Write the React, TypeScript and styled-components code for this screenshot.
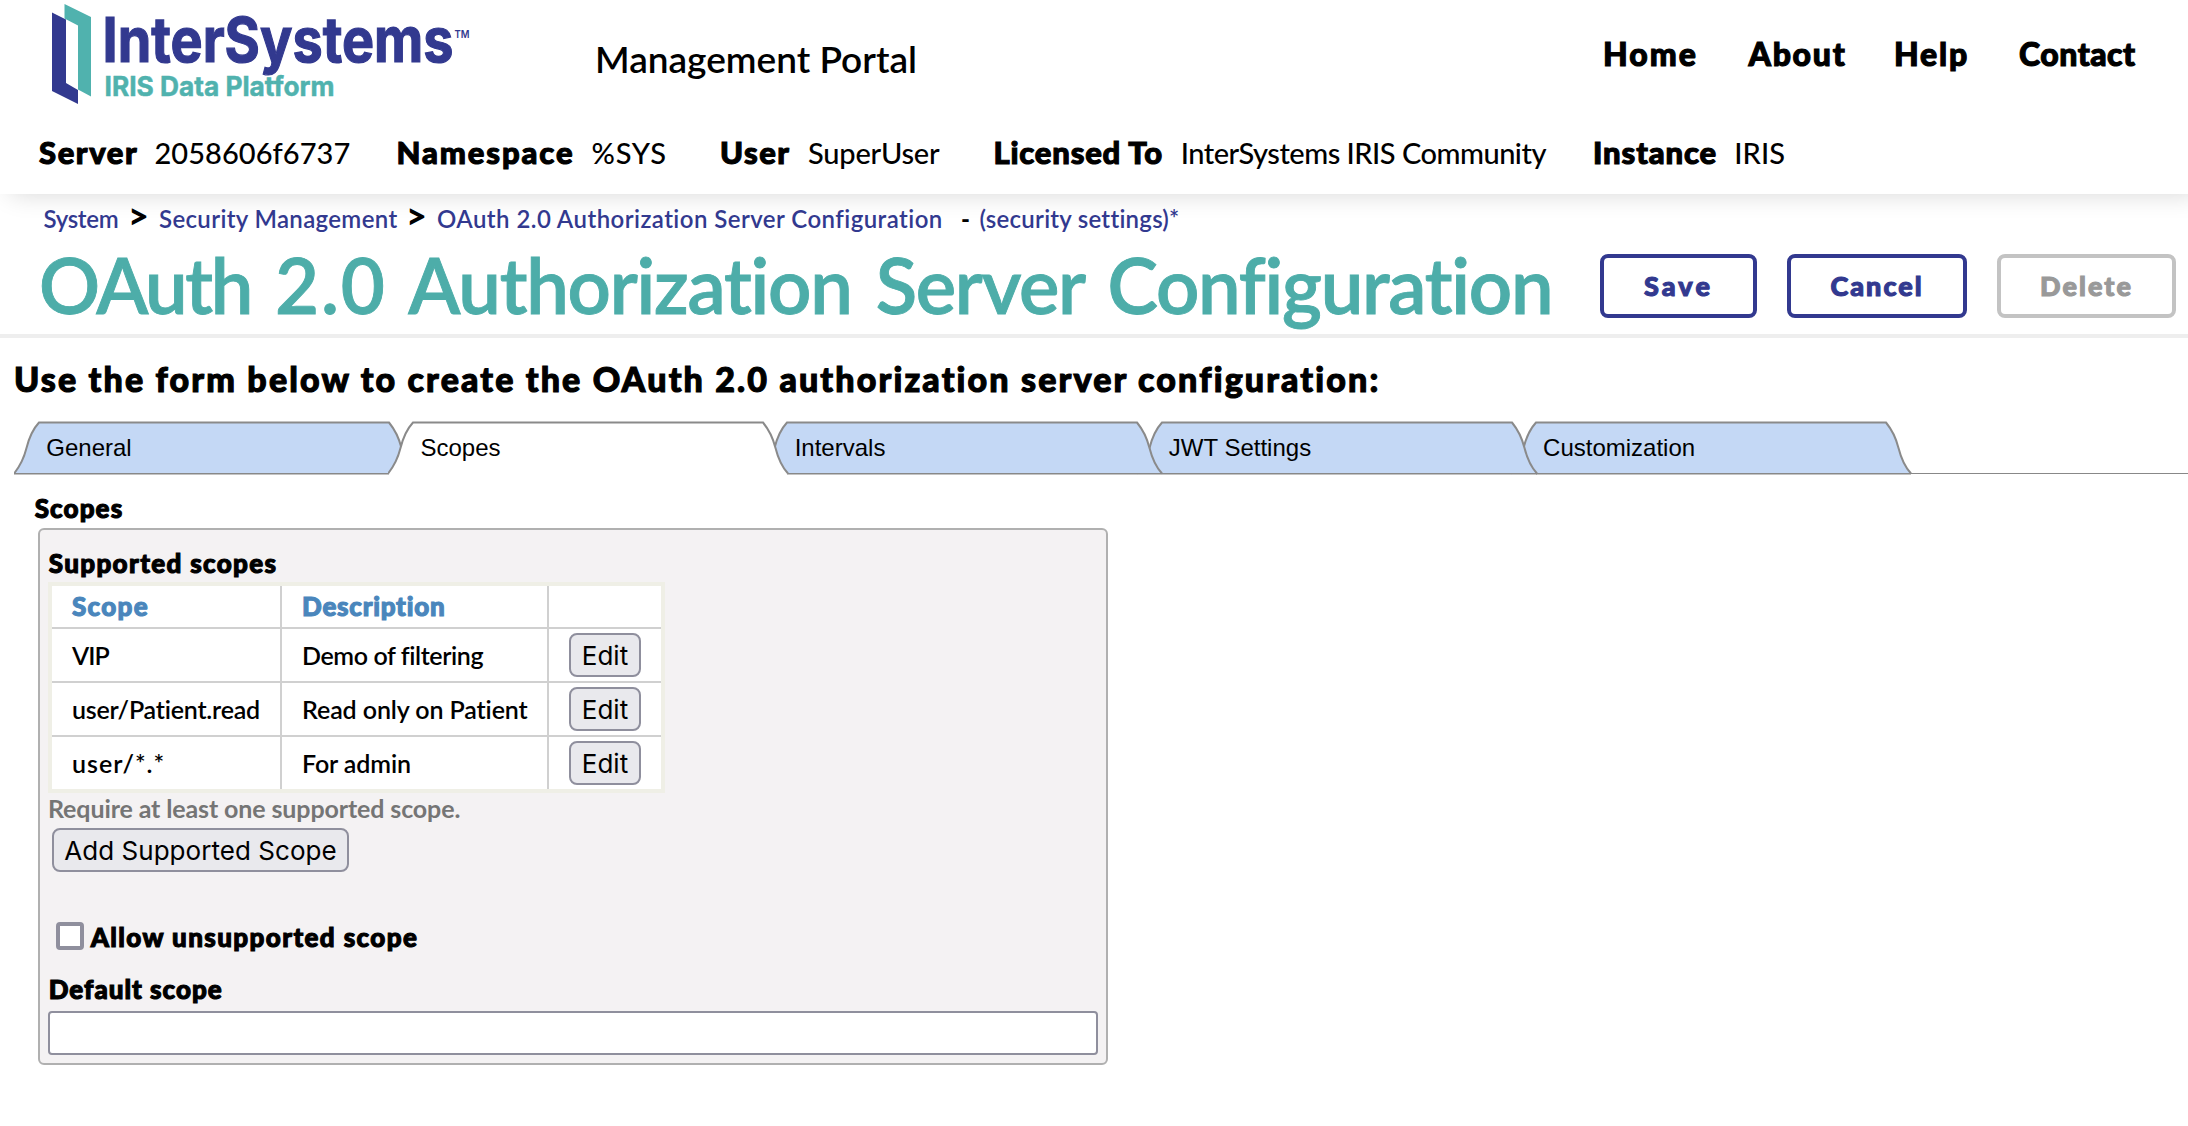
import React from "react";
import styled, { createGlobalStyle, css } from "styled-components";

const GlobalStyle = createGlobalStyle`
  * { box-sizing: border-box; }
  body {
    margin: 0;
    background: #fff;
    color: #000;
    font-family: Lato, "Open Sans", sans-serif;
    font-weight: 600;
    overflow-x: hidden;
  }
`;

const NAVY = "#32398f";
const TEAL = "#4dada9";

const tracked = css<{ $track?: number }>`
  letter-spacing: ${(p) => p.$track ?? 0}px;
  white-space: nowrap;
`;

const heavy = css`
  font-weight: 900;
  -webkit-text-stroke: 1.1px currentColor;
`;

/* ---------- header ---------- */

const Page = styled.div`
  width: 2188px;
  height: 1126px;
  overflow: hidden;
`;

const Header = styled.header`
  height: 194px;
  background: #fff;
  box-shadow: 10px 0 24px rgba(0, 0, 0, 0.16);
`;

const HeaderTop = styled.div`
  display: flex;
  align-items: flex-start;
  height: 132px;
  padding-left: 48px;
`;

const LogoSvg = styled.svg`
  display: block;
  width: 432px;
  height: 110px;
`;

const PortalName = styled.div`
  ${tracked}
  margin: 37px 0 0 115px;
  width: 1008px;
  font-size: 37px;
  font-weight: 600;
  line-height: 44px;
`;

const Nav = styled.nav`
  display: grid;
  grid-template-columns: 145.5px 145.5px 125px auto;
  margin-top: 34px;
`;

const NavLink = styled.a`
  ${tracked}
  ${heavy}
  font-size: 32px;
  line-height: 40px;
`;

const InfoBar = styled.div`
  display: grid;
  grid-template-columns: 115.5px 242px 195px 128.5px 88px 185.5px 187.2px 412.3px 141.3px auto;
  align-items: baseline;
  padding-left: 39px;
  line-height: 40px;
`;

const InfoLabel = styled.span`
  ${tracked}
  ${heavy}
  font-size: 31px;
`;

const InfoValue = styled.span`
  ${tracked}
  font-size: 29px;
  font-weight: 500;
`;

/* ---------- title area ---------- */

const TitleArea = styled.section`
  height: 144px;
  padding-top: 9px;
  border-bottom: 4px solid #eee;
`;

const Crumbs = styled.div`
  display: grid;
  grid-template-columns: 84.5px 31px 247px 31px 524px 18.5px auto;
  height: 32px;
  padding-left: 43.5px;
  font-size: 24px;
  line-height: 32px;
`;

const Crumb = styled.a`
  ${tracked}
  color: ${NAVY};
`;

const Arrow = styled.span`
  font-size: 36px;
  font-weight: 900;
  line-height: 24px;
`;

const Dash = styled.span`
  font-weight: 900;
`;

const TitleRow = styled.div`
  display: flex;
  align-items: center;
  height: 99px;
  padding-left: 38px;
`;

const Title = styled.h1`
  ${tracked}
  width: 1562px;
  margin: 0;
  padding-left: 1px;
  color: ${TEAL};
  font-size: 76px;
  font-weight: 600;
  line-height: 92px;
  word-spacing: 6.5px;
  -webkit-text-stroke: 0.9px currentColor;
`;

const Word = styled.span`
  ${tracked}
`;

const Actions = styled.div`
  display: flex;
  gap: 30px;
  padding-top: 2px;
`;

const ActionButton = styled.button<{ $width: number; $track: number }>`
  ${tracked}
  width: ${(p) => p.$width}px;
  height: 64px;
  padding: 0 0 1px;
  border: 4px solid ${NAVY};
  border-radius: 8px;
  background: #fff;
  color: ${NAVY};
  font: 900 27px Lato, sans-serif;
  -webkit-text-stroke: 1.1px currentColor;

  &:disabled {
    border-color: #c3c3c3;
    color: #999;
  }
`;

/* ---------- tabs ---------- */

const FormHeading = styled.h2`
  ${tracked}
  ${heavy}
  height: 40px;
  margin: 21px 0 22px 14px;
  font-size: 34px;
  line-height: 40px;
`;

const TabStrip = styled.div`
  display: flex;
  height: 54px;
  padding-left: 14px;
`;

const Tab = styled.div<{ $z: number }>`
  position: relative;
  z-index: ${(p) => p.$z};
  flex: none;
  width: 374.2px;
  height: 54px;
  padding: 9.5px 0 0 32.3px;
  font: 24px/34px "Liberation Sans", Arial, sans-serif;
`;

const TabShape = styled.svg`
  position: absolute;
  left: 0;
  top: 0;
  width: 402px;
  height: 54px;
`;

const TabLabel = styled.span`
  position: relative;
`;

const TabRule = styled.div`
  flex: 1;
  height: 1.4px;
  margin: 52px 0 0 25px;
  background: #888;
`;

/* ---------- form ---------- */

const Form = styled.main`
  padding: 17px 0 0 34px;
`;

const Label = styled.div`
  ${tracked}
  ${heavy}
  padding-left: 0.7px;
  font-size: 26px;
  line-height: 32px;
`;

const Panel = styled.div`
  width: 1070px;
  height: 537px;
  margin: 4px 0 0 4px;
  padding: 17px 9px 0 8px;
  border: 2px solid #b0b0b0;
  border-radius: 6px;
  background: #f4f2f3;
`;

const ScopeTable = styled.div`
  display: grid;
  grid-template-columns: 230px 267px 112px;
  grid-template-rows: 43px 54px 54px 52px;
  width: 617px;
  margin-top: 3px;
  border: 4px solid #efefe6;
  background: #fff;
`;

const Cell = styled.div<{ $last?: boolean; $track?: number; $mid?: boolean }>`
  ${tracked}
  display: flex;
  align-items: center;
  justify-content: ${(p) => (p.$mid ? "center" : "flex-start")};
  padding-left: ${(p) => (p.$mid ? 0 : 20)}px;
  border-right: ${(p) => (p.$mid ? "0" : "2px solid #d0d0d0")};
  border-bottom: ${(p) => (p.$last ? "0" : "2px solid #d0d0d0")};
  font-size: 25px;
`;

const HeadCell = styled(Cell)`
  ${heavy}
  padding-bottom: 1px;
  color: #4a86bc;
  font-size: 26px;
`;

const SystemButton = styled.button<{ $width: number; $track: number }>`
  ${tracked}
  display: block;
  width: ${(p) => p.$width}px;
  height: 44px;
  padding: 0;
  border: 2px solid #8f8f9d;
  border-radius: 8px;
  background: #e9e9ed;
  color: #000;
  font: 400 26px Inter, sans-serif;
`;

const Hint = styled.div`
  ${tracked}
  margin-bottom: 5px;
  color: #757575;
  font-size: 25px;
  font-weight: 700;
  line-height: 30px;
`;

const AddSlot = styled.div`
  padding-left: 4px;
`;

const CheckRow = styled.label`
  display: flex;
  align-items: center;
  gap: 6px;
  margin: 48px 0 21px 8px;
`;

const CheckBox = styled.input`
  appearance: none;
  width: 28px;
  height: 28px;
  margin: 0;
  border: 4px solid #8f8f9d;
  border-radius: 4px;
  background: #fff;
`;

const CheckLabel = styled(Label)`
  padding-top: 1px;
  margin-bottom: -1px;
`;

const TextInput = styled.input`
  display: block;
  width: 1050px;
  height: 44px;
  margin-top: 6px;
  border: 2px solid #8f8f9d;
  border-radius: 4px;
  background: #fff;
`;

const Logo = () => (
  <LogoSvg viewBox="48 0 432 110">
    <path d="M52 12.5 L66 19.5 V83 L78 90 V104 L52 91 Z" fill={NAVY} />
    <path d="M64.5 4 L91 17 V96.5 L78 89.5 V25.5 L64.5 18.5 Z" fill="#50b2ae" />
    <text x="102.5" y="62.3" fill={NAVY} stroke={NAVY} strokeWidth="1.2" fontFamily="Inter, sans-serif" fontSize="62" fontWeight="700" textLength="351" lengthAdjust="spacingAndGlyphs">InterSystems</text>
    <text x="454.5" y="38" fill={NAVY} fontFamily="Inter, sans-serif" fontSize="10.5" fontWeight="600" textLength="15" lengthAdjust="spacingAndGlyphs">TM</text>
    <text x="104.5" y="95.8" fill="#50b2ae" stroke="#50b2ae" strokeWidth="0.5" fontFamily="Inter, sans-serif" fontSize="27" fontWeight="700" textLength="230" lengthAdjust="spacingAndGlyphs">IRIS Data Platform</text>
  </LogoSvg>
);

const tabs = ["General", "Scopes", "Intervals", "JWT Settings", "Customization"];
const ACTIVE = 1;

const outline = "M0 52.5 C7 44 10 37 12.5 27 S19 8 25 1.5 H375 C382 10 385 17 387.5 27 S394 46 400 52.5";

const info: [string, number, string, number][] = [
  ["Server", 1.6, "2058606f6737", 0.05],
  ["Namespace", 1.9, "%SYS", 0.8],
  ["User", 1.5, "SuperUser", -0.2],
  ["Licensed To", 0.8, "InterSystems IRIS Community", -0.5],
  ["Instance", 0.9, "IRIS", 0.1],
];

const scopes: [string, number, string, number][] = [
  ["VIP", -0.9, "Demo of filtering", -0.4],
  ["user/Patient.read", -0.2, "Read only on Patient", -0.1],
  ["user/*.*", 1, "For admin", -0.1],
];

export default function App() {
  return (
    <Page>
      <GlobalStyle />
      <Header>
        <HeaderTop>
          <Logo />
          <PortalName>Management Portal</PortalName>
          <Nav>
            <NavLink $track={2}>Home</NavLink>
            <NavLink $track={1.7}>About</NavLink>
            <NavLink $track={1.8}>Help</NavLink>
            <NavLink $track={0.5}>Contact</NavLink>
          </Nav>
        </HeaderTop>
        <InfoBar>
          {info.map(([label, lt, value, vt]) => (
            <React.Fragment key={label}>
              <InfoLabel $track={lt}>{label}</InfoLabel>
              <InfoValue $track={vt}>{value}</InfoValue>
            </React.Fragment>
          ))}
        </InfoBar>
      </Header>

      <TitleArea>
        <Crumbs>
          <Crumb $track={-0.3}>System</Crumb>
          <Arrow>&gt;</Arrow>
          <Crumb $track={0.35}>Security Management</Crumb>
          <Arrow>&gt;</Arrow>
          <Crumb $track={0.45}>OAuth 2.0 Authorization Server Configuration</Crumb>
          <Dash>-</Dash>
          <Crumb $track={0.25}>(security settings)*</Crumb>
        </Crumbs>
        <TitleRow>
          <Title $track={-1.25}>
            <Word $track={-2.4}>OAuth</Word> <Word $track={1.8}>2.0</Word> Authorization Server Configuration
          </Title>
          <Actions>
            <ActionButton $width={157} $track={3.1}>Save</ActionButton>
            <ActionButton $width={180} $track={2}>Cancel</ActionButton>
            <ActionButton $width={179} $track={2.1} disabled>Delete</ActionButton>
          </Actions>
        </TitleRow>
      </TitleArea>

      <FormHeading $track={2.14}>
        Use the form below to create the OAuth 2.0 authorization server configuration:
      </FormHeading>

      <TabStrip>
        {tabs.map((name, i) => (
          <Tab key={name} $z={10 - Math.abs(i - ACTIVE)}>
            <TabShape viewBox="0 0 402 54">
              {i === ACTIVE && <path d="M1 51 H399 V54 H1 Z" fill="#fff" />}
              <path
                d={outline}
                fill={i === ACTIVE ? "#fff" : "#c4d8f5"}
                stroke="#8a8a8a"
                strokeWidth="2"
              />
              {i !== ACTIVE && (
                <path d={`M${i > ACTIVE ? 25 : 0} 52.7 H400`} stroke="#888" strokeWidth="1.4" />
              )}
            </TabShape>
            <TabLabel>{name}</TabLabel>
          </Tab>
        ))}
        <TabRule />
      </TabStrip>

      <Form>
        <Label $track={1.1}>Scopes</Label>
        <Panel>
          <Label $track={1.35}>Supported scopes</Label>
          <ScopeTable>
            <HeadCell $track={1.3}>Scope</HeadCell>
            <HeadCell $track={0.75}>Description</HeadCell>
            <HeadCell $mid />
            {scopes.map(([scope, st, description, dt], i) => {
              const last = i === scopes.length - 1;
              return (
                <React.Fragment key={scope}>
                  <Cell $last={last} $track={st}>{scope}</Cell>
                  <Cell $last={last} $track={dt}>{description}</Cell>
                  <Cell $last={last} $mid>
                    <SystemButton $width={72} $track={0}>Edit</SystemButton>
                  </Cell>
                </React.Fragment>
              );
            })}
          </ScopeTable>
          <Hint $track={-0.12}>Require at least one supported scope.</Hint>
          <AddSlot>
            <SystemButton $width={297} $track={0.05}>Add Supported Scope</SystemButton>
          </AddSlot>
          <CheckRow>
            <CheckBox type="checkbox" />
            <CheckLabel as="span" $track={1.4}>Allow unsupported scope</CheckLabel>
          </CheckRow>
          <Label $track={1}>Default scope</Label>
          <TextInput type="text" />
        </Panel>
      </Form>
    </Page>
  );
}
